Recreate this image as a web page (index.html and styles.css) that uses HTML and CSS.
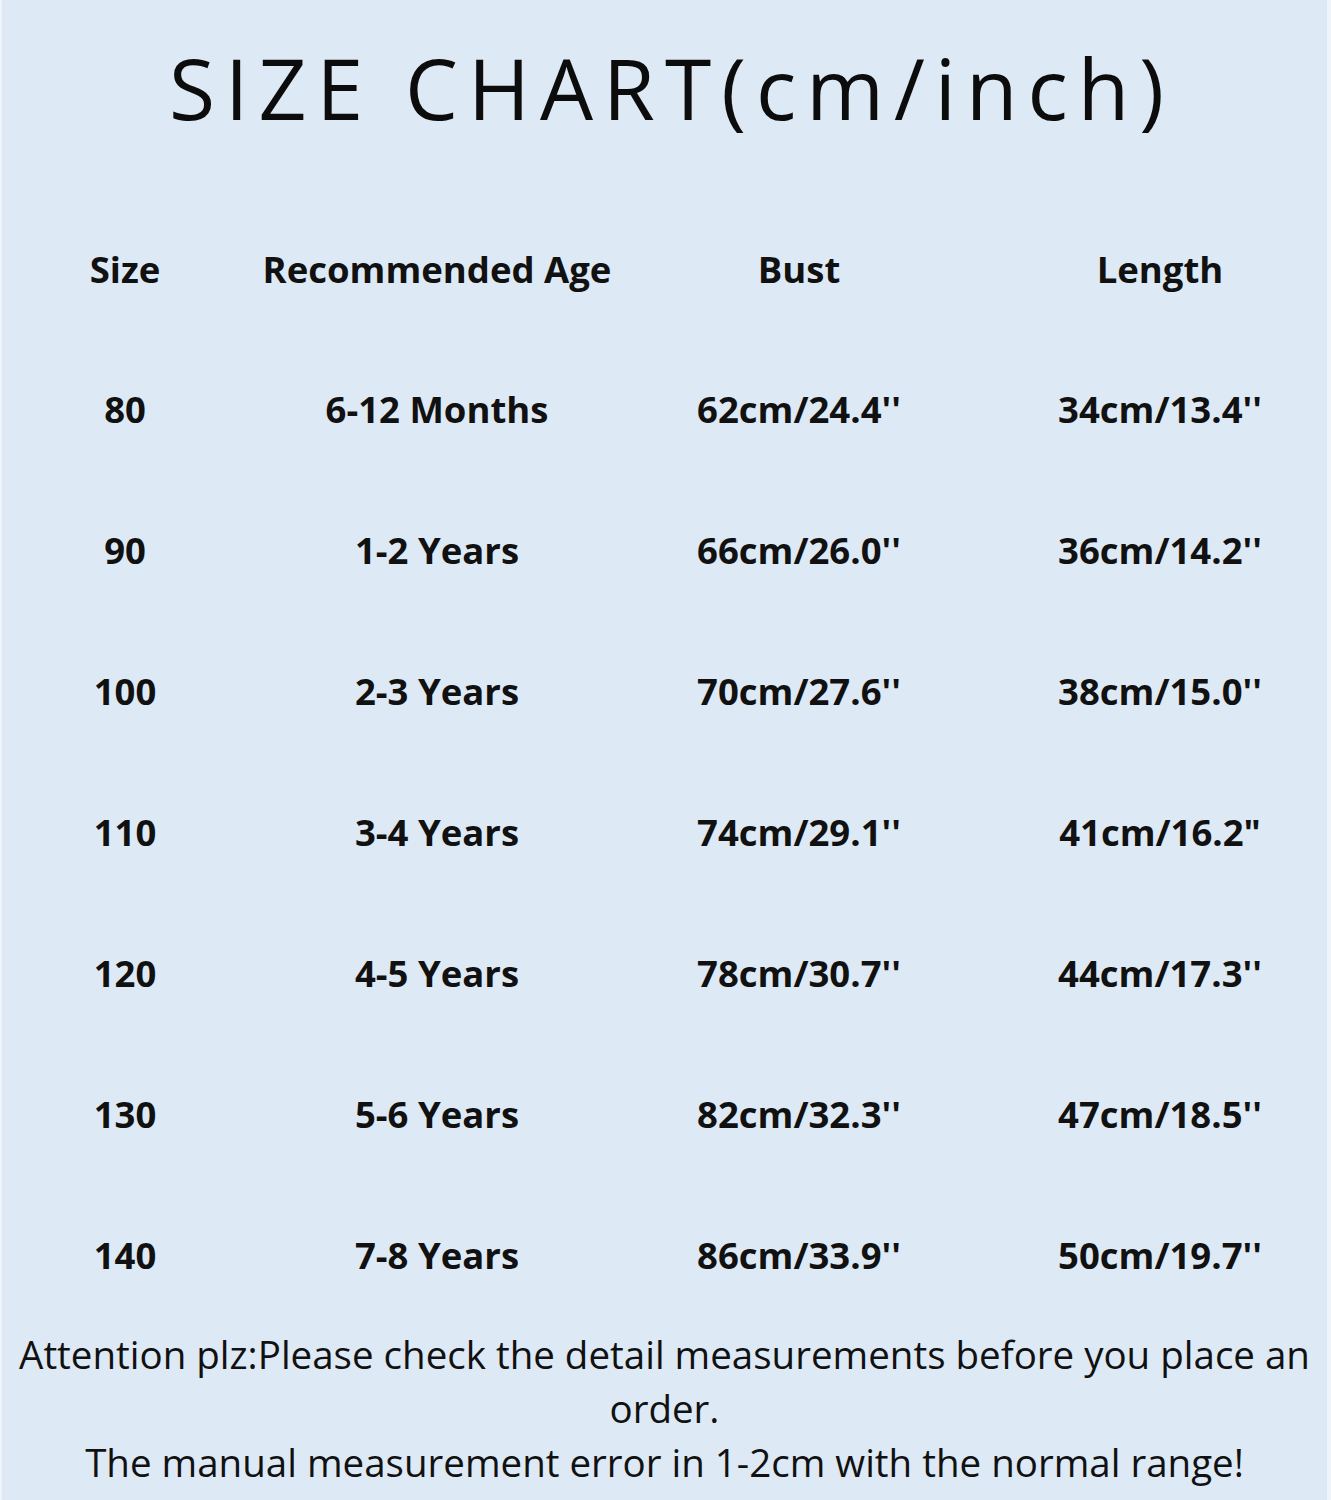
FILE: index.html
```html
<!DOCTYPE html>
<html lang="en">
<head>
<meta charset="utf-8">
<title>Size Chart</title>
<link rel="stylesheet" href="styles.css">
</head>
<body>
<div class="page">
  <h1 class="title">SIZE CHART(cm/inch)</h1>
  <div class="chart">
    <div class="row head">
      <div class="cell c1">Size</div>
      <div class="cell c2">Recommended Age</div>
      <div class="cell c3">Bust</div>
      <div class="cell c4">Length</div>
    </div>
    <div class="row">
      <div class="cell c1">80</div>
      <div class="cell c2">6-12 Months</div>
      <div class="cell c3">62cm/24.4''</div>
      <div class="cell c4">34cm/13.4''</div>
    </div>
    <div class="row">
      <div class="cell c1">90</div>
      <div class="cell c2">1-2 Years</div>
      <div class="cell c3">66cm/26.0''</div>
      <div class="cell c4">36cm/14.2''</div>
    </div>
    <div class="row">
      <div class="cell c1">100</div>
      <div class="cell c2">2-3 Years</div>
      <div class="cell c3">70cm/27.6''</div>
      <div class="cell c4">38cm/15.0''</div>
    </div>
    <div class="row">
      <div class="cell c1">110</div>
      <div class="cell c2">3-4 Years</div>
      <div class="cell c3">74cm/29.1''</div>
      <div class="cell c4">41cm/16.2"</div>
    </div>
    <div class="row">
      <div class="cell c1">120</div>
      <div class="cell c2">4-5 Years</div>
      <div class="cell c3">78cm/30.7''</div>
      <div class="cell c4">44cm/17.3''</div>
    </div>
    <div class="row">
      <div class="cell c1">130</div>
      <div class="cell c2">5-6 Years</div>
      <div class="cell c3">82cm/32.3''</div>
      <div class="cell c4">47cm/18.5''</div>
    </div>
    <div class="row">
      <div class="cell c1">140</div>
      <div class="cell c2">7-8 Years</div>
      <div class="cell c3">86cm/33.9''</div>
      <div class="cell c4">50cm/19.7''</div>
    </div>
  </div>
  <p class="note">Attention plz:Please check the detail measurements before you place an order.<br>The manual measurement error in 1-2cm with the normal range!</p>
</div>
</body>
</html>
```

FILE: styles.css
```css
html, body {
  margin: 0;
  padding: 0;
  background: #dde9f5;
}

.page {
  width: 1331px;
  height: 1500px;
  box-sizing: border-box;
  border-left: 2px solid #eef4fa;
  border-right: 4px solid #eef4fa;
  background: #dde9f5;
  color: #111;
  overflow: hidden;
}

.title {
  margin: 0;
  height: 200px;
  padding-left: 14px;
  line-height: 176px;
  text-align: center;
  font-family: "Open Sans", sans-serif;
  font-weight: 400;
  font-size: 84px;
  letter-spacing: 10px;
  color: #0c0c0c;
}

.chart {
  display: flex;
  flex-direction: column;
}

.row {
  display: grid;
  grid-template-columns: 246px 378px 346px 359px;
  height: 141px;
  align-items: center;
  font-family: "Open Sans", sans-serif;
  font-weight: 700;
  font-size: 36.5px;
  color: #111;
}

.row.head {
  height: 138px;
}

.cell {
  text-align: center;
}

.c4 {
  padding-left: 17px;
}

.note {
  margin: 2px 0 0;
  padding: 0;
  text-align: center;
  font-family: "Open Sans", sans-serif;
  font-weight: 400;
  font-size: 38.5px;
  line-height: 54px;
  color: #111;
}
```
